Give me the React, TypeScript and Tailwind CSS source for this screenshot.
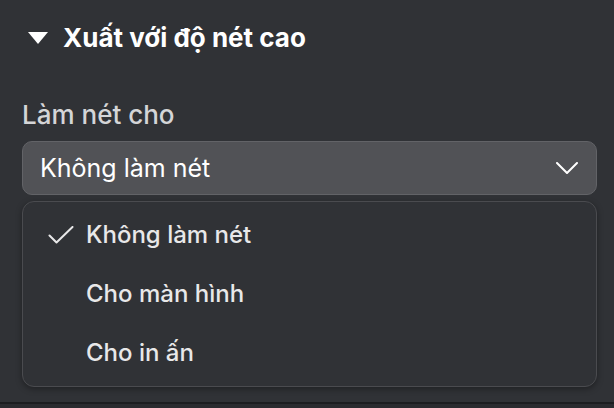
import React from "react";

export default function App() {
  const items = ["Không làm nét", "Cho màn hình", "Cho in ấn"];
  return (
    <div
      className="w-[614px] h-[408px] bg-[#303236] flex flex-col overflow-hidden"
      style={{ fontFamily: "Inter, 'Noto Sans', sans-serif" }}
    >
      <div className="flex-1 flex flex-col pl-[22px] pr-[17px]">
        <div className="flex items-center h-[76px] pl-[6px] gap-[15px]">
          <svg width="20" height="12" viewBox="0 0 20 12">
            <polygon points="0,0 20,0 10,12" fill="#ffffff" />
          </svg>
          <span className="text-white font-bold text-[26px] leading-[30px]">Xuất với độ nét cao</span>
        </div>
        <div className="mt-[24px] text-[#d4d5d7] text-[26px] font-medium leading-[30px]">Làm nét cho</div>
        <div className="mt-[11px] h-[54px] rounded-[10px] bg-[#515256] border border-[#626367] flex items-center justify-between pl-[17px] pr-[18px]">
          <span className="text-white text-[25px] leading-[30px]">Không làm nét</span>
          <svg width="22" height="12" viewBox="0 0 22 12" fill="none">
            <path d="M1 1 L11 11 L21 1" stroke="#ffffff" strokeWidth="2" strokeLinecap="round" strokeLinejoin="round" />
          </svg>
        </div>
        <div className="mt-[6px] h-[186px] rounded-[12px] bg-[#303236] border border-[#4a4b4f] shadow-[0_2px_6px_rgba(0,0,0,0.35)] flex flex-col py-[3px]">
          {items.map((t, i) => (
            <div key={t} className="h-[60px] flex items-center">
              <div className="w-[63px] flex justify-end pr-[12px]">
                {i === 0 && (
                  <svg width="26" height="18" viewBox="0 0 26 18" fill="none">
                    <path d="M1.5 9.5 L8.5 16.5 L24.5 1" stroke="#e8e8e9" strokeWidth="2" strokeLinecap="round" strokeLinejoin="round" />
                  </svg>
                )}
              </div>
              <span className="text-[#e8e8e9] text-[24px] font-medium leading-[30px]">{t}</span>
            </div>
          ))}
        </div>
      </div>
      <div className="h-[2px] bg-[#1c1d20]" />
      <div className="h-[4px] bg-[#2a2b2f]" />
    </div>
  );
}
